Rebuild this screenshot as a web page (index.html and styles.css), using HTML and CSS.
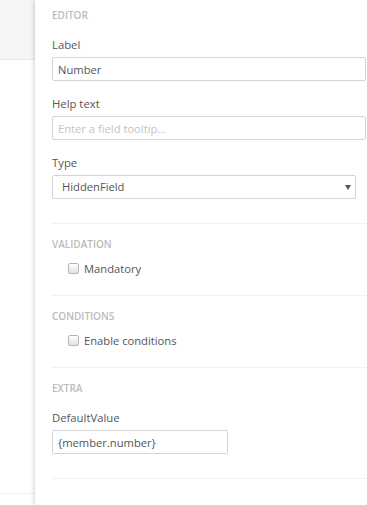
FILE: index.html
```html
<!DOCTYPE html>
<html lang="en">
<head>
<meta charset="UTF-8">
<meta name="viewport" content="width=device-width, initial-scale=1.0">
<title>Field editor</title>
<link rel="stylesheet" href="styles.css">
</head>
<body>
<div class="backdrop">
    <div class="backdrop-top"></div>
    <div class="backdrop-rest"></div>
</div>

<div class="panel">
    <div class="section first">
        <h4>Editor</h4>

        <div class="field">
            <label for="label">Label</label>
            <input type="text" id="label" value="Number">
        </div>

        <div class="field">
            <label for="helpText">Help text</label>
            <input type="text" id="helpText" placeholder="Enter a field tooltip...">
        </div>

        <div class="field">
            <label>Type</label>
            <div class="select">HiddenField</div>
        </div>
    </div>

    <div class="section">
        <h4>Validation</h4>
        <div class="check"><span class="box"></span>Mandatory</div>
    </div>

    <div class="section">
        <h4>Conditions</h4>
        <div class="check"><span class="box"></span>Enable conditions</div>
    </div>

    <div class="section">
        <h4>Extra</h4>
        <div class="field">
            <label for="defaultValue">DefaultValue</label>
            <input type="text" id="defaultValue" class="short" value="{member.number}">
        </div>
    </div>
</div>
</body>
</html>
```

FILE: styles.css
```css
body {
    margin: 0;
    font-family: "Open Sans", Arial, sans-serif;
    background: #fff;
    display: flex;
    height: 505px;
    overflow: hidden;
}
.backdrop { width: 35px; flex: none; display: flex; flex-direction: column; }
.backdrop-top { height: 59px; background: #f5f5f5; border-bottom: 1px solid #e6e6e6; }
.backdrop-rest { flex: 1; border-bottom: 1px dotted #e3e3e3; margin-bottom: 11px; }

.panel {
    flex: 1;
    background: #fff;
    box-shadow: -1px 0 4px rgba(0,0,0,0.18);
    padding-left: 17px;
}
.section { padding: 14px 0 24px; border-bottom: 1px solid #f2f2f2; }
.section.first { padding-top: 9px; }
h4 {
    margin: 0 0 16px;
    font-size: 10px;
    line-height: 12px;
    font-weight: 600;
    text-transform: uppercase;
    color: #bbb;
}
.field { margin-bottom: 15px; }
.field:last-child { margin-bottom: 0; }
label { display: block; font-size: 11.3px; line-height: 16px; color: #555; margin-bottom: 4px; }
input {
    display: block;
    box-sizing: border-box;
    width: 314px;
    height: 24px;
    padding: 0 5px;
    border: 1px solid #d4d4d4;
    border-radius: 2px;
    font-family: inherit;
    font-size: 11.2px;
    color: #555;
}
input::placeholder { color: #c4c4c4; }
input.short { width: 176px; }
.select {
    position: relative;
    box-sizing: border-box;
    width: 304px;
    height: 24px;
    padding: 0 9px;
    border: 1px solid #d4d4d4;
    border-radius: 2px;
    font-size: 11.2px;
    line-height: 22px;
    color: #555;
}
.select::after {
    content: "";
    position: absolute;
    right: 4px;
    top: 9px;
    border-left: 3px solid transparent;
    border-right: 3px solid transparent;
    border-top: 5px solid #555;
}
.section h4 + .check { margin-top: -6px; }
.check { display: flex; align-items: center; padding-left: 16px; font-size: 11.2px; line-height: 17px; color: #555; margin-bottom: -6px; }
.box {
    width: 9px;
    height: 9px;
    border: 1px solid #b5b5b5;
    border-radius: 2px;
    background: linear-gradient(#fdfdfd, #e2e2e2);
    margin-right: 5px;
}
```
